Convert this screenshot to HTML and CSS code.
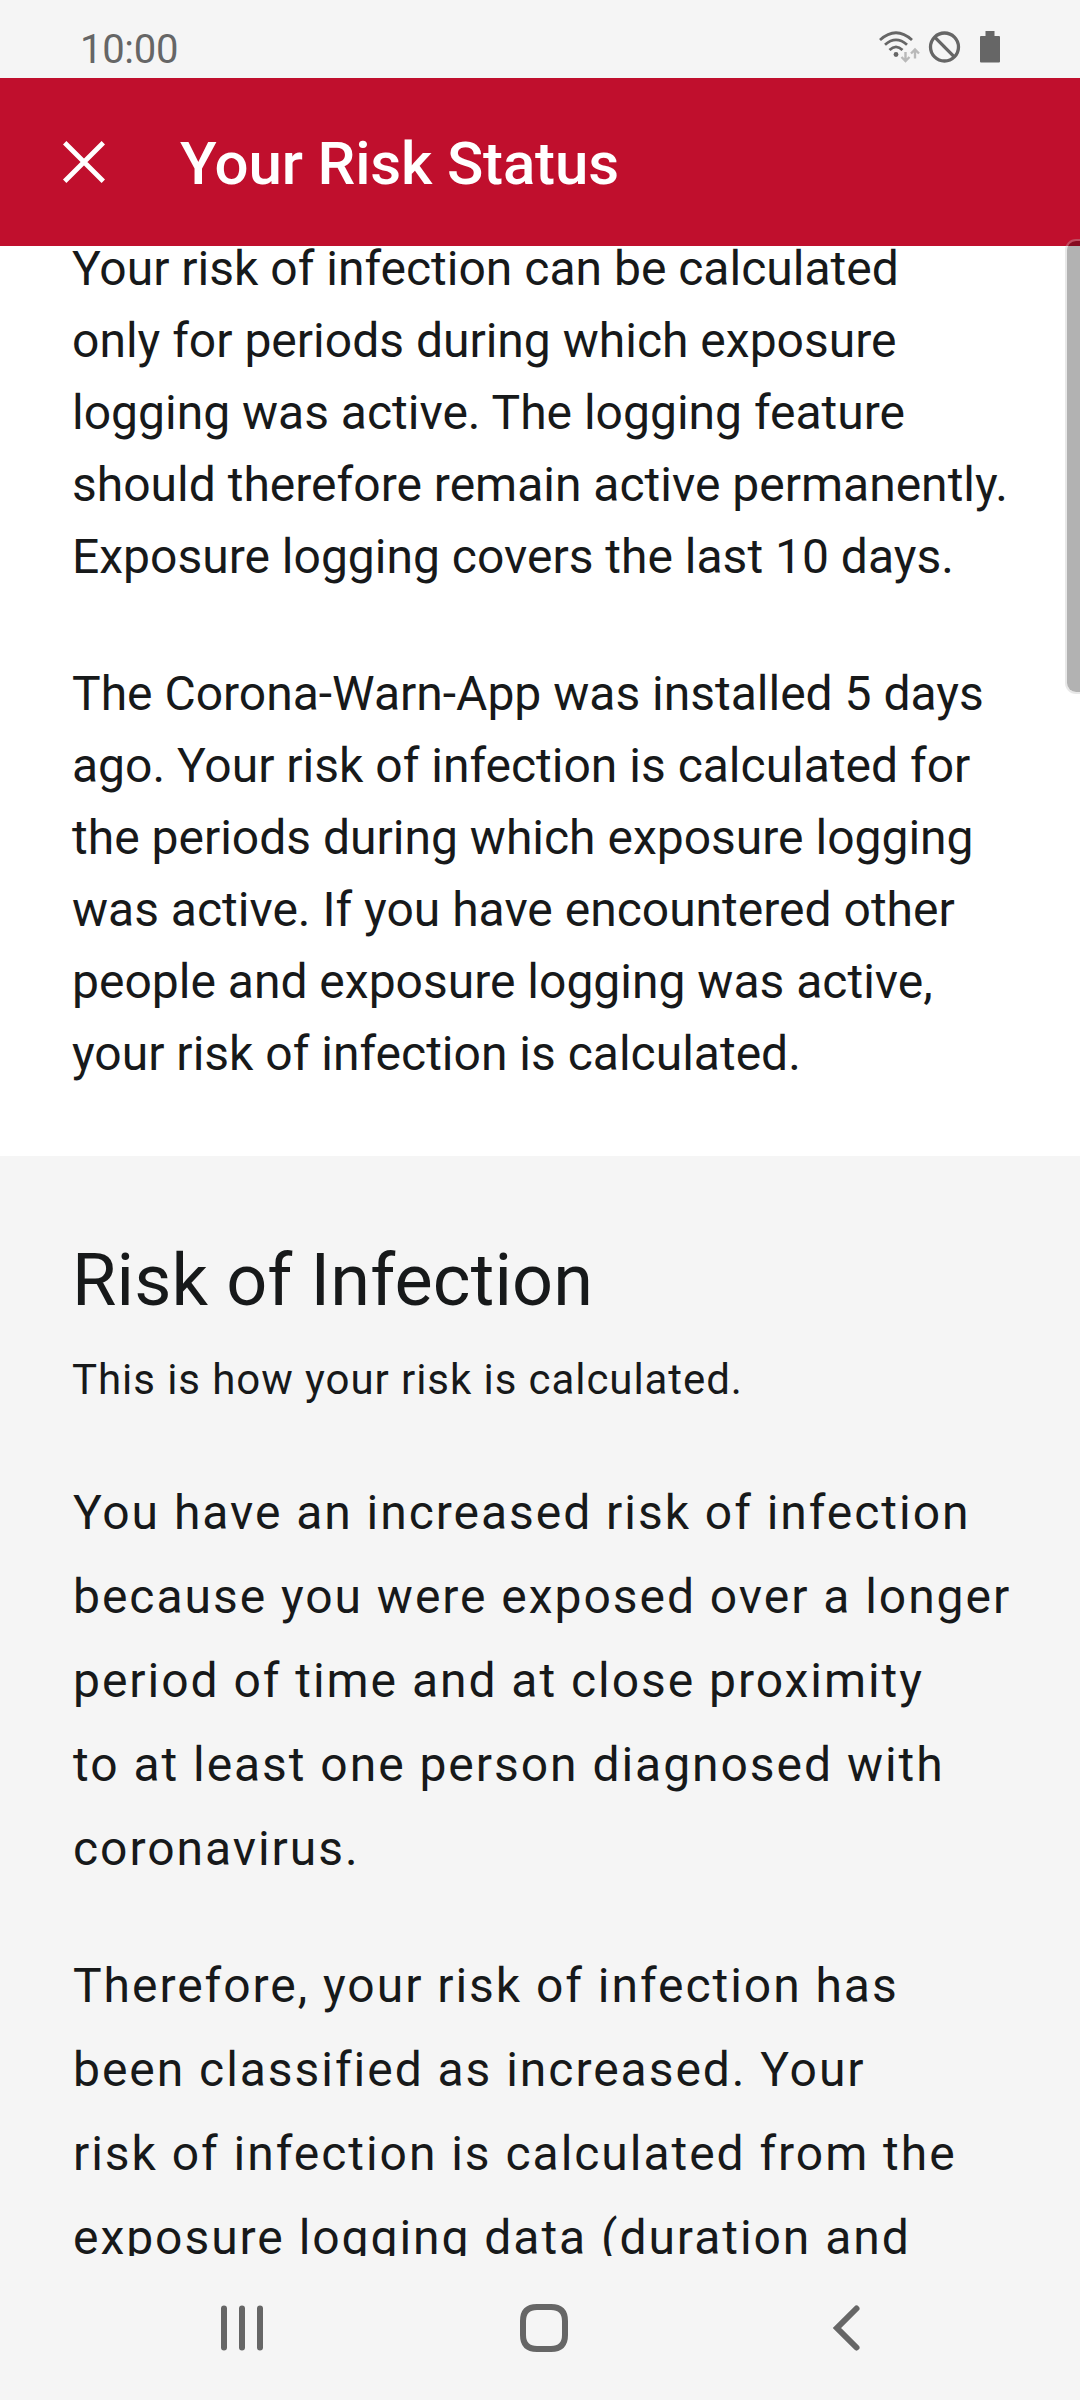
FILE: index.html
```html
<!DOCTYPE html>
<html lang="en">
<head>
<meta charset="utf-8">
<title>Your Risk Status</title>
<link rel="stylesheet" href="styles.css">
</head>
<body>
<div class="screen">
  <header class="status">
    <span class="clock">10:00</span>
    <svg class="status-icons" width="124" height="36" viewBox="878 29 124 36" fill="none" stroke="#666" stroke-width="2.8">
      <path d="M880 40Q896 25.5 912 40M885 44.7Q896 35 907 44.7M889.5 50Q896 43.8 902.5 50"/>
      <circle cx="896" cy="54.5" r="2.4" fill="#666" stroke="none"/>
      <path d="M905.5 52v9m-4-4 4 4 4-4M915 58.5v-9m-4 4 4-4 4 4" stroke="#b9b9b9" stroke-width="2.4"/>
      <circle cx="944.5" cy="47" r="14" stroke-width="3.3"/><path d="m934.7 37.2 19.6 19.6" stroke-width="3.3"/>
      <path d="M980 37q0-1 1-1h4.500v-5h9v5h4.500q1 0 1 1v24.500q0 1-1 1h-18q-1 0-1-1z" fill="#666" stroke="none"/>
    </svg>
  </header>
  <div class="toolbar">
    <svg class="close" width="44" height="44" viewBox="0 0 44 44" stroke="#fff" stroke-width="4.8"><path d="m2.700 2.700 38.600 38.600M41.300 2.700 2.700 41.300"/></svg>
    <h1>Your Risk Status</h1>
  </div>
  <main class="content">
    <section class="period">
      <p>Your risk of infection can be calculated<br>only for periods during which exposure<br>logging was active. The logging feature<br>should therefore remain active permanently.<br>Exposure logging covers the last 10 days.</p>
      <p>The Corona-Warn-App was installed 5 days<br>ago. Your risk of infection is calculated for<br>the periods during which exposure logging<br>was active. If you have encountered other<br>people and exposure logging was active,<br>your risk of infection is calculated.</p>
    </section>
    <section class="risk">
      <h2>Risk of Infection</h2>
      <p class="subtitle">This is how your risk is calculated.</p>
      <p class="body">You have an increased risk of infection<br>because you were exposed over a longer<br>period of time and at close proximity<br>to at least one person diagnosed with<br>coronavirus.</p>
      <p class="body">Therefore, your risk of infection has<br>been classified as increased. Your<br>risk of infection is calculated from the<br>exposure logging data (duration and</p>
    </section>
  </main>
  <div class="scrollbar"></div>
  <nav class="navbar">
    <svg width="1080" height="144" viewBox="0 0 1080 144" fill="none" stroke="#666" stroke-width="6" stroke-linecap="round">
      <path d="M224 52.500v39M242 52.500v39M260 52.500v39"/>
      <path d="M537 51h14q14 0 14 14v14q0 14-14 14h-14q-14 0-14-14V65q0-14 14-14z"/>
      <path d="M856.500 52.500 837 72l19.500 19.500"/>
    </svg>
  </nav>
</div>
</body>
</html>
```
FILE: styles.css
```css
* { box-sizing: border-box; margin: 0; padding: 0; }
body { font-family: Roboto, sans-serif; color: #17191a; background: #f5f5f5; }
svg { display: block; }
.screen { position: relative; width: 1080px; height: 2400px; display: flex; flex-direction: column; overflow: hidden; }
.status { height: 78px; flex: none; display: flex; justify-content: space-between; align-items: flex-start; padding: 25px 78px 0 80px; color: #666; }
.clock { font-size: 40px; line-height: 47px; letter-spacing: -.3px; padding-top: 1px; }
.status-icons { margin-top: 4px; }
.toolbar { height: 168px; flex: none; background: #c00f2d; display: flex; align-items: center; padding-left: 62px; gap: 74px; color: #fff; }
h1 { font-size: 60px; font-weight: 500; line-height: 70px; letter-spacing: -.15px; padding-top: 4px; }
.content { height: 2010px; flex: none; overflow: hidden; }
.period { display: flow-root; height: 910px; background: #fff; padding: 0 72px; }
.period p { font-size: 48px; line-height: 72px; white-space: nowrap; }
.period p:first-child { margin-top: -13px; }
.period p + p { margin-top: 65px; }
.risk { padding: 81px 72px 0; white-space: nowrap; }
h2 { font-size: 72px; font-weight: 400; line-height: 88px; letter-spacing: .15px; }
.subtitle { font-size: 42px; line-height: 50px; letter-spacing: .93px; margin-top: 30px; }
.body { font-size: 48px; line-height: 84px; letter-spacing: 1.96px; margin-top: 66px; padding-left: 1px; }
.body + .body { margin-top: 53px; }
.scrollbar { position: absolute; top: 239px; right: 0; width: 15px; height: 455px; background: rgba(0,0,0,.3); background-clip: padding-box; border: 2px solid rgba(190,190,190,.35); border-right: 0; border-radius: 11px 0 0 11px; }
.navbar { height: 144px; flex: none; }
```
